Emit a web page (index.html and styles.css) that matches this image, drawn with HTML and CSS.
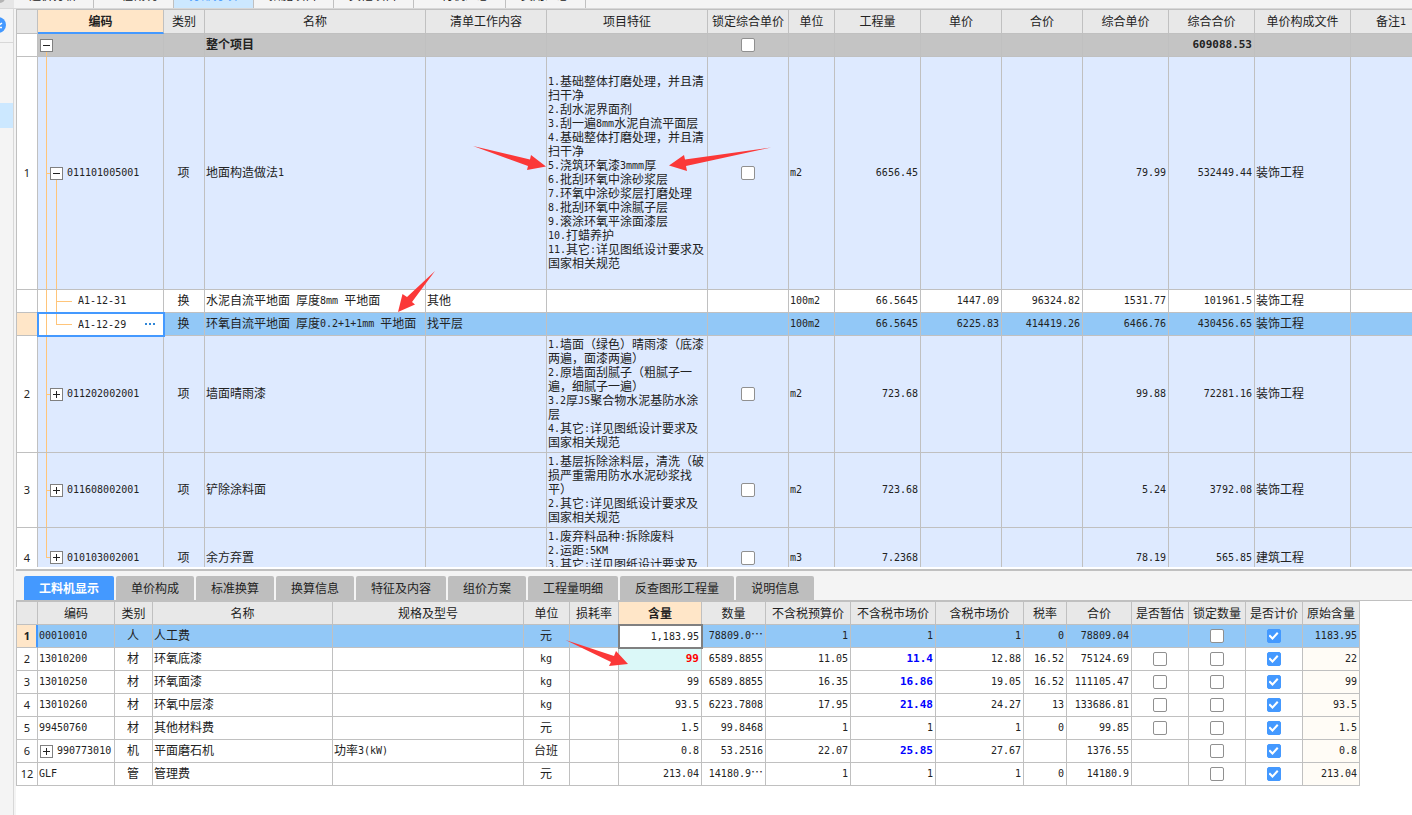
FILE: index.html
```html
<!DOCTYPE html>
<html lang="zh-CN">
<head>
<meta charset="utf-8">
<title>分部分项</title>
<link rel="stylesheet" href="styles.css">
</head>
<body>
<header class="top">
  <div class="top-corner"><svg width="13" height="8" viewBox="0 0 13 8"><circle cx="0" cy="-2" r="5" fill="#b4b4b4"/></svg></div>
  <nav class="top-tabs">
    <button class="top-tab">造价分析</button>
    <button class="top-tab">工程概况</button>
    <button class="top-tab current">分部分项</button>
    <button class="top-tab">措施项目</button>
    <button class="top-tab">其他项目</button>
    <button class="top-tab">人材机汇总</button>
    <button class="top-tab">费用汇总</button>
  </nav>
</header>
<div class="work">
  <aside class="side">
    <div class="side-head"><svg width="13" height="32" viewBox="0 0 13 32"><circle cx="-2" cy="16" r="8" fill="#4499ff"/><path d="M-3 15.500H0L2 14M-3 18.500H2" stroke="#fff" stroke-width="1.500" fill="none"/></svg></div>
    <div class="side-item"></div>
  </aside>
  <main class="main">
    <section class="upper">
      <table class="grid bill">
        <colgroup><col class="w21"><col class="w126"><col class="w41"><col class="w221"><col class="w121"><col class="w161"><col class="w81"><col class="w46"><col class="w86"><col class="w81"><col class="w81"><col class="w86"><col class="w86"><col class="w96"><col class="w81"></colgroup>
        <thead>
          <tr><th></th><th class="active">编码</th><th>类别</th><th>名称</th><th>清单工作内容</th><th>项目特征</th><th>锁定综合单价</th><th>单位</th><th>工程量</th><th>单价</th><th>合价</th><th>综合单价</th><th>综合合价</th><th>单价构成文件</th><th>备注<span class="n">1</span></th></tr>
        </thead>
        <tbody>
          <tr class="root"><td class="idx"></td><td class="tree t-root"><div class="node"><button class="twist" aria-label="收起"></button></div></td><td></td><td>整个项目</td><td></td><td></td><td class="c"><input type="checkbox" aria-label="锁定综合单价"></td><td></td><td></td><td></td><td></td><td></td><td class="num">609088.53</td><td></td><td></td></tr>
          <tr class="item r1"><td class="idx">1</td><td class="tree t-open"><div class="node l1"><button class="twist" aria-label="收起"></button><span class="n">011101005001</span></div></td><td class="c">项</td><td>地面构造做法<span class="n">1</span></td><td></td>
            <td class="feat"><span class="n">1.</span>基础整体打磨处理，并且清扫干净<br><span class="n">2.</span>刮水泥界面剂<br><span class="n">3.</span>刮一遍<span class="n">8mm</span>水泥自流平面层<br><span class="n">4.</span>基础整体打磨处理，并且清扫干净<br><span class="n">5.</span>浇筑环氧漆<span class="n">3mmm</span>厚<br><span class="n">6.</span>批刮环氧中涂砂浆层<br><span class="n">7.</span>环氧中涂砂浆层打磨处理<br><span class="n">8.</span>批刮环氧中涂腻子层<br><span class="n">9.</span>滚涂环氧平涂面漆层<br><span class="n">10.</span>打蜡养护<br><span class="n">11.</span>其它<span class="n">:</span>详见图纸设计要求及国家相关规范</td>
            <td class="c"><input type="checkbox" aria-label="锁定综合单价"></td><td class="unit">m2</td><td class="num">6656.45</td><td></td><td></td><td class="num">79.99</td><td class="num">532449.44</td><td>装饰工程</td><td></td></tr>
          <tr class="sub"><td class="idx"></td><td class="tree t-mid"><div class="node l2"><span class="n">A1-12-31</span></div></td><td class="c">换</td><td>水泥自流平地面<span class="n"> </span>厚度<span class="n">8mm </span>平地面</td><td>其他</td><td></td><td></td><td class="unit">100m2</td><td class="num">66.5645</td><td class="num">1447.09</td><td class="num">96324.82</td><td class="num">1531.77</td><td class="num">101961.5</td><td>装饰工程</td><td></td></tr>
          <tr class="sub picked"><td class="idx"></td><td class="tree t-last editing"><div class="node l2"><input class="field code-field" type="text" aria-label="编码" value="A1-12-29"><button class="more" aria-label="选择"><svg width="11" height="2" viewBox="0 0 11 2"><path d="M0 0h2v2H0zM4 0h2v2H4zM8 0h2v2H8z" fill="#2f86d8"/></svg></button></div></td><td class="c">换</td><td>环氧自流平地面<span class="n"> </span>厚度<span class="n">0.2+1+1mm </span>平地面</td><td>找平层</td><td></td><td></td><td class="unit">100m2</td><td class="num">66.5645</td><td class="num">6225.83</td><td class="num">414419.26</td><td class="num">6466.76</td><td class="num">430456.65</td><td>装饰工程</td><td></td></tr>
          <tr class="item r2"><td class="idx">2</td><td class="tree t-item"><div class="node l1"><button class="twist plus" aria-label="展开"></button><span class="n">011202002001</span></div></td><td class="c">项</td><td>墙面晴雨漆</td><td></td>
            <td class="feat"><span class="n">1.</span>墙面（绿色）晴雨漆（底漆两遍，面漆两遍）<br><span class="n">2.</span>原墙面刮腻子（粗腻子一遍，细腻子一遍）<br><span class="n">3.2</span>厚<span class="n">JS</span>聚合物水泥基防水涂层<br><span class="n">4.</span>其它<span class="n">:</span>详见图纸设计要求及国家相关规范</td>
            <td class="c"><input type="checkbox" aria-label="锁定综合单价"></td><td class="unit">m2</td><td class="num">723.68</td><td></td><td></td><td class="num">99.88</td><td class="num">72281.16</td><td>装饰工程</td><td></td></tr>
          <tr class="item r3"><td class="idx">3</td><td class="tree t-item"><div class="node l1"><button class="twist plus" aria-label="展开"></button><span class="n">011608002001</span></div></td><td class="c">项</td><td>铲除涂料面</td><td></td>
            <td class="feat"><span class="n">1.</span>基层拆除涂料层，清洗（破损严重需用防水水泥砂浆找平）<br><span class="n">2.</span>其它<span class="n">:</span>详见图纸设计要求及国家相关规范</td>
            <td class="c"><input type="checkbox" aria-label="锁定综合单价"></td><td class="unit">m2</td><td class="num">723.68</td><td></td><td></td><td class="num">5.24</td><td class="num">3792.08</td><td>装饰工程</td><td></td></tr>
          <tr class="item r4"><td class="idx">4</td><td class="tree t-end"><div class="node l1"><button class="twist plus" aria-label="展开"></button><span class="n">010103002001</span></div></td><td class="c">项</td><td>余方弃置</td><td></td>
            <td class="feat"><span class="n">1.</span>废弃料品种<span class="n">:</span>拆除废料<br><span class="n">2.</span>运距<span class="n">:5KM</span><br><span class="n">3.</span>其它<span class="n">:</span>详见图纸设计要求及国家相关规范</td>
            <td class="c"><input type="checkbox" aria-label="锁定综合单价"></td><td class="unit">m3</td><td class="num">7.2368</td><td></td><td></td><td class="num">78.19</td><td class="num">565.85</td><td>建筑工程</td><td></td></tr>
        </tbody>
      </table>
    </section>
    <section class="lower">
      <div class="tabs" role="tablist">
        <button class="tab on" role="tab" aria-selected="true">工料机显示</button>
        <button class="tab" role="tab">单价构成</button>
        <button class="tab" role="tab">标准换算</button>
        <button class="tab" role="tab">换算信息</button>
        <button class="tab" role="tab">特征及内容</button>
        <button class="tab" role="tab">组价方案</button>
        <button class="tab" role="tab">工程量明细</button>
        <button class="tab" role="tab">反查图形工程量</button>
        <button class="tab" role="tab">说明信息</button>
      </div>
      <div class="sheet">
        <table class="grid parts">
          <colgroup><col class="w21"><col class="w77"><col class="w38"><col class="w180"><col class="w191"><col class="w46"><col class="w49"><col class="w83"><col class="w64"><col class="w85"><col class="w85"><col class="w88"><col class="w43"><col class="w65"><col class="w57"><col class="w57"><col class="w57"><col class="w57"></colgroup>
          <thead>
            <tr><th></th><th>编码</th><th>类别</th><th>名称</th><th>规格及型号</th><th>单位</th><th>损耗率</th><th class="active">含量</th><th>数量</th><th>不含税预算价</th><th>不含税市场价</th><th>含税市场价</th><th>税率</th><th>合价</th><th>是否暂估</th><th>锁定数量</th><th>是否计价</th><th>原始含量</th></tr>
          </thead>
          <tbody>
            <tr class="picked"><td class="idx">1</td><td class="mark"><span class="n">00010010</span></td><td class="c">人</td><td>人工费</td><td></td><td class="c">元</td><td></td><td class="num typing"><input class="field amount-field" type="text" aria-label="含量" value="1,183.95"></td><td class="num">78809.0<span class="dots">…</span></td><td class="num">1</td><td class="num">1</td><td class="num">1</td><td class="num">0</td><td class="num">78809.04</td><td></td><td class="c"><input type="checkbox" aria-label="锁定数量"></td><td class="c"><input type="checkbox" aria-label="是否计价" checked></td><td class="num orig">1183.95</td></tr>
            <tr><td class="idx">2</td><td><span class="n">13010200</span></td><td class="c">材</td><td>环氧底漆</td><td></td><td class="c"><span class="n">kg</span></td><td></td><td class="num alert">99</td><td class="num">6589.8855</td><td class="num">11.05</td><td class="num price">11.4</td><td class="num">12.88</td><td class="num">16.52</td><td class="num">75124.69</td><td class="c"><input type="checkbox" aria-label="是否暂估"></td><td class="c"><input type="checkbox" aria-label="锁定数量"></td><td class="c"><input type="checkbox" aria-label="是否计价" checked></td><td class="num orig">22</td></tr>
            <tr><td class="idx">3</td><td><span class="n">13010250</span></td><td class="c">材</td><td>环氧面漆</td><td></td><td class="c"><span class="n">kg</span></td><td></td><td class="num">99</td><td class="num">6589.8855</td><td class="num">16.35</td><td class="num price">16.86</td><td class="num">19.05</td><td class="num">16.52</td><td class="num">111105.47</td><td class="c"><input type="checkbox" aria-label="是否暂估"></td><td class="c"><input type="checkbox" aria-label="锁定数量"></td><td class="c"><input type="checkbox" aria-label="是否计价" checked></td><td class="num orig">99</td></tr>
            <tr><td class="idx">4</td><td><span class="n">13010260</span></td><td class="c">材</td><td>环氧中层漆</td><td></td><td class="c"><span class="n">kg</span></td><td></td><td class="num">93.5</td><td class="num">6223.7808</td><td class="num">17.95</td><td class="num price">21.48</td><td class="num">24.27</td><td class="num">13</td><td class="num">133686.81</td><td class="c"><input type="checkbox" aria-label="是否暂估"></td><td class="c"><input type="checkbox" aria-label="锁定数量"></td><td class="c"><input type="checkbox" aria-label="是否计价" checked></td><td class="num orig">93.5</td></tr>
            <tr><td class="idx">5</td><td><span class="n">99450760</span></td><td class="c">材</td><td>其他材料费</td><td></td><td class="c">元</td><td></td><td class="num">1.5</td><td class="num">99.8468</td><td class="num">1</td><td class="num">1</td><td class="num">1</td><td class="num">0</td><td class="num">99.85</td><td class="c"><input type="checkbox" aria-label="是否暂估"></td><td class="c"><input type="checkbox" aria-label="锁定数量"></td><td class="c"><input type="checkbox" aria-label="是否计价" checked></td><td class="num orig">1.5</td></tr>
            <tr><td class="idx">6</td><td class="tree"><div class="node"><button class="twist plus" aria-label="展开"></button><span class="n">990773010</span></div></td><td class="c">机</td><td>平面磨石机</td><td>功率<span class="n">3(kW)</span></td><td class="c">台班</td><td></td><td class="num">0.8</td><td class="num">53.2516</td><td class="num">22.07</td><td class="num price">25.85</td><td class="num">27.67</td><td></td><td class="num">1376.55</td><td></td><td class="c"><input type="checkbox" aria-label="锁定数量"></td><td class="c"><input type="checkbox" aria-label="是否计价" checked></td><td class="num orig">0.8</td></tr>
            <tr><td class="idx">12</td><td><span class="n">GLF</span></td><td class="c">管</td><td>管理费</td><td></td><td class="c">元</td><td></td><td class="num">213.04</td><td class="num">14180.9<span class="dots">…</span></td><td class="num">1</td><td class="num">1</td><td class="num">1</td><td class="num">0</td><td class="num">14180.9</td><td></td><td class="c"><input type="checkbox" aria-label="锁定数量"></td><td class="c"><input type="checkbox" aria-label="是否计价" checked></td><td class="num orig">213.04</td></tr>
          </tbody>
        </table>
      </div>
    </section>
  </main>
</div>
<svg class="arrows" width="1412" height="815" viewBox="0 0 1412 815" aria-hidden="true">
  <g fill="#fb3838">
    <path d="M473 146L530 159.500L531 155L546 166.500L527 170L528 166Z"/>
    <path d="M669 165.500L684 155L685 159.500L771 147.500L686 166L687 171Z"/>
    <path d="M398 312L402.500 294L407 297L435 271L412 302L415 304.500Z"/>
    <path d="M565.500 640L614 656L616 651L628 664L609 666L611 662Z"/>
  </g>
</svg>
</body>
</html>
```

FILE: styles.css
```css
* { box-sizing: border-box; }

body {
  margin: 0;
  height: 100vh;
  display: flex;
  flex-direction: column;
  overflow: hidden;
  background: #f4f4f4;
  color: #222;
  font: 12px/14px "Noto Sans CJK SC", sans-serif;
}

button, input { margin: 0; padding: 0; font: inherit; color: inherit; }

.n, .num, .unit, .field {
  font-family: "DejaVu Sans Mono", "Noto Sans CJK SC", monospace;
  font-size: 10px;
}
.n { line-height: 10px; white-space: pre; vertical-align: 1px; }

/* top tab strip */
.top { flex: none; display: flex; height: 9px; border-bottom: 1px solid #d8d8d8; }
.top-corner { width: 14px; overflow: hidden; background: #e6e6e6; }
.top-corner svg { display: block; }
.top-tabs { display: flex; align-items: flex-end; height: 8px; overflow: hidden; }
.top-tab {
  flex: none;
  height: 24px;
  padding: 0 16px 2px 15px;
  border: 0;
  border-right: 1px solid #c0c0c0;
  background: #f4f4f4;
}
.top-tab.current { background: #cce8ff; color: #4499ff; }

.work { flex: 1; min-height: 0; display: flex; }

.side { flex: none; width: 14px; border-right: 1px solid #d8d8d8; overflow: hidden; }
.side-head { height: 34px; border-bottom: 1px solid #d8d8d8; }
.side-head svg { display: block; }
.side-item { height: 25px; margin-top: 60px; background: #cce8ff; }

.main { flex: 1; min-width: 0; display: flex; flex-direction: column; padding-left: 2px; }
.upper { flex: 1; min-height: 0; overflow: hidden; background: #fff; border-bottom: 2px solid #fff; }
.lower {
  flex: 0 0 246px;
  display: flex;
  flex-direction: column;
  overflow: hidden;
  border-top: 2px solid #c0c0c0;
}

/* grids */
.grid {
  table-layout: fixed;
  border-collapse: separate;
  border-spacing: 0;
  border: solid #c0c0c0;
  border-width: 1px 0 0 1px;
}
.bill { width: 1416px; }
.parts { width: 1344px; }
.w21 { width: 21px; }
.w38 { width: 38px; }
.w41 { width: 41px; }
.w43 { width: 43px; }
.w46 { width: 46px; }
.w49 { width: 49px; }
.w57 { width: 57px; }
.w64 { width: 64px; }
.w65 { width: 65px; }
.w77 { width: 77px; }
.w81 { width: 81px; }
.w83 { width: 83px; }
.w85 { width: 85px; }
.w86 { width: 86px; }
.w88 { width: 88px; }
.w96 { width: 96px; }
.w121 { width: 121px; }
.w126 { width: 126px; }
.w161 { width: 161px; }
.w180 { width: 180px; }
.w191 { width: 191px; }
.w221 { width: 221px; }
.grid th, .grid td {
  padding: 0 2px 2px 1px;
  border: solid #c0c0c0;
  border-width: 0 1px 1px 0;
  vertical-align: middle;
  text-align: left;
  white-space: nowrap;
  overflow: hidden;
}
.grid th { background: #e8e8e8; padding: 0 0 2px; font-weight: 400; text-align: center; }
.parts th { padding: 0; }
.grid th.active { background: #ffe6c8; font-weight: 700; }
.bill th { height: 24px; }
.bill th.active { border-bottom: 2px solid #4499ff; padding-bottom: 0; }
.parts th, .grid tr { height: 23px; }
.grid .c { text-align: center; }
.grid .num, .grid .unit, .grid .tree, .grid td:has(input) { padding-bottom: 0; }
.grid .tree { padding-left: 2px; }
.grid .num { text-align: right; }
.grid .idx {
  padding: 0;
  background: #fff;
  text-align: center;
  font-family: "Noto Sans", sans-serif;
  font-size: 11px;
}
.grid .feat { padding: 0 1px 2px; white-space: normal; }

.root td { background-color: #c4c4c4; font-weight: 700; }
.root .num { font-size: 11px; }
.item td { background-color: #deeaff; }
.bill .r1 { height: 233px; }
.bill .r2 { height: 117px; }
.bill .r3 { height: 75px; }
.bill .r4 { height: 60px; }
.sub td { background-color: #fff; }
.parts td { background: #fff; }
.parts .orig { background: #fffcf6; }
.grid .picked td { background-color: #92c8f7; }
.grid .picked .idx { background: #ffe6c8; font-weight: 700; }
.parts .alert { background: #dbf8f8; color: #f00; font-weight: 700; font-size: 11px; }
.parts .price { color: #00f; font-weight: 700; font-size: 11px; }
.parts .picked .idx { border-right-color: #4499ff; box-shadow: inset -1px 0 #4499ff; }
.dots { font: 12px/10px "Noto Sans CJK SC", sans-serif; }

/* tree column */
.node { display: flex; align-items: center; gap: 4px; }
.node.l1 { padding-left: 10px; }
.node.l2 { padding-left: 38px; }
.tree { background-repeat: no-repeat; }
.t-root {
  background-image: linear-gradient(#ffc57a, #ffc57a);
  background-size: 1px 50%;
  background-position: 8px 100%;
}
.t-item, .t-end {
  background-image: linear-gradient(#ffc57a, #ffc57a), linear-gradient(#ffc57a, #ffc57a);
  background-size: 1px 100%, 4px 1px;
  background-position: 8px 0, 8px 50%;
}
.t-end { background-size: 1px 50%, 4px 1px; }
.t-open {
  background-image: linear-gradient(#ffc57a, #ffc57a), linear-gradient(#ffc57a, #ffc57a), linear-gradient(#ffc57a, #ffc57a);
  background-size: 1px 100%, 4px 1px, 1px 50%;
  background-position: 8px 0, 8px 50%, 18px 100%;
}
.t-mid, .t-last {
  background-image: linear-gradient(#ffc57a, #ffc57a), linear-gradient(#ffc57a, #ffc57a), linear-gradient(#ffc57a, #ffc57a);
  background-size: 1px 100%, 16px 1px, 1px 100%;
  background-position: 8px 0, 18px 50%, 18px 0;
}
.t-last { background-size: 1px 100%, 16px 1px, 1px 50%; }
.twist {
  flex: none;
  width: 13px;
  height: 13px;
  border: 1px solid #808080;
  border-radius: 0;
  background: linear-gradient(#222, #222) center / 7px 1px no-repeat #fff;
}
.twist.plus {
  background:
    linear-gradient(#222, #222) center / 7px 1px no-repeat,
    linear-gradient(#222, #222) center / 1px 7px no-repeat #fff;
}

/* cell editors */
.grid .picked .editing { background-color: #fff; outline: 2px solid #4499ff; outline-offset: -1px; }
.field { border: 0; outline: 0; background: transparent; height: 16px; }
.code-field { flex: 1; min-width: 0; }
.more { flex: none; width: 16px; height: 16px; border: 0; background: transparent; display: flex; align-items: center; }
.grid .picked .typing {
  background: #fff;
  outline: 2px solid #808080;
  outline-offset: -1px;
}
.amount-field { display: block; width: 100%; text-align: right; }
.parts th.active { border-bottom-color: #4499ff; }

input[type="checkbox"] {
  appearance: none;
  display: grid;
  place-items: center;
  width: 14px;
  height: 14px;
  margin: 0 auto;
  border: 1px solid #909090;
  border-radius: 2px;
  background: #fff;
}
input[type="checkbox"]:checked { border-color: #4499ff; background: #4499ff; }
input[type="checkbox"]:checked::after {
  content: "";
  width: 10px;
  height: 8px;
  background: #fff;
  clip-path: polygon(0 50%, 15% 31%, 40% 62%, 85% 0, 100% 19%, 40% 100%);
}

/* lower tabs */
.tabs { flex: none; display: flex; gap: 2px; padding: 5px 8px 0; border-bottom: 1px solid #c0c0c0; }
.tab {
  height: 24px;
  padding: 0 15px;
  border: 0;
  border-radius: 2px 2px 0 0;
  background: #bebebe;
}
.tab.on { background: #4499ff; color: #fff; font-weight: 700; }
.sheet { flex: 1; background: #fff; }

/* annotation arrows */
.arrows { position: absolute; left: 0; top: 0; pointer-events: none; }
```
